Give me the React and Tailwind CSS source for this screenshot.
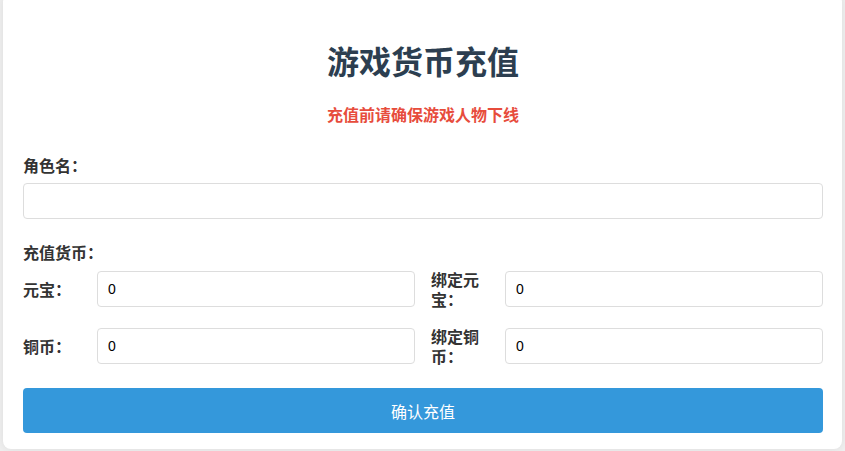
import { useState } from 'react';

const FONT = { fontFamily: '"Noto Sans CJK SC", "Noto Sans", sans-serif' };

function CurrencyField({ label, value, onChange }) {
    return (
        <div className="flex items-center">
            <label className="w-[60px] mr-[14px] shrink-0 text-base leading-5 font-bold text-[#333]">{label}</label>
            <input
                type="number"
                value={value}
                onChange={(e) => onChange(e.target.value)}
                className="flex-1 min-w-0 h-9 px-[10px] border border-[#ddd] rounded bg-white text-[14px] text-black outline-none [appearance:textfield] [&::-webkit-inner-spin-button]:appearance-none"
                style={{ fontFamily: '"Liberation Sans", Arial, sans-serif' }}
            />
        </div>
    );
}

export default function App() {
    const [role, setRole] = useState('');
    const [yuanbao, setYuanbao] = useState('0');
    const [bindYuanbao, setBindYuanbao] = useState('0');
    const [tongbi, setTongbi] = useState('0');
    const [bindTongbi, setBindTongbi] = useState('0');

    return (
        <div className="min-h-[451px] bg-[#efefef] overflow-hidden" style={FONT}>
            <div className="ml-[3px] w-[839px] -mt-[6px] bg-white rounded-lg shadow-[0_0_8px_rgba(0,0,0,0.08)] pt-[47px] pb-4 pl-5 pr-[19px] flex flex-col">
                <h1 className="text-center text-[32px] leading-[38px] font-bold text-[#2c3e50]">游戏货币充值</h1>
                <p className="mt-[23px] text-center text-base leading-6 font-bold text-[#e74c3c]">充值前请确保游戏人物下线</p>

                <label className="mt-[27px] text-base leading-6 font-bold text-[#333]">角色名：</label>
                <input
                    type="text"
                    value={role}
                    onChange={(e) => setRole(e.target.value)}
                    className="mt-[6px] h-9 px-[10px] border border-[#ddd] rounded bg-white text-sm outline-none"
                />

                <div className="mt-[21px] text-base leading-6 font-bold text-[#333]">充值货币：</div>
                <div className="mt-[5px] grid grid-cols-2 gap-x-4 gap-y-[17px]">
                    <CurrencyField label="元宝：" value={yuanbao} onChange={setYuanbao} />
                    <CurrencyField label="绑定元宝：" value={bindYuanbao} onChange={setBindYuanbao} />
                    <CurrencyField label="铜币：" value={tongbi} onChange={setTongbi} />
                    <CurrencyField label="绑定铜币：" value={bindTongbi} onChange={setBindTongbi} />
                </div>

                <button className="mt-[22px] h-[45px] rounded bg-[#3498db] text-white text-base">确认充值</button>
            </div>
        </div>
    );
}
